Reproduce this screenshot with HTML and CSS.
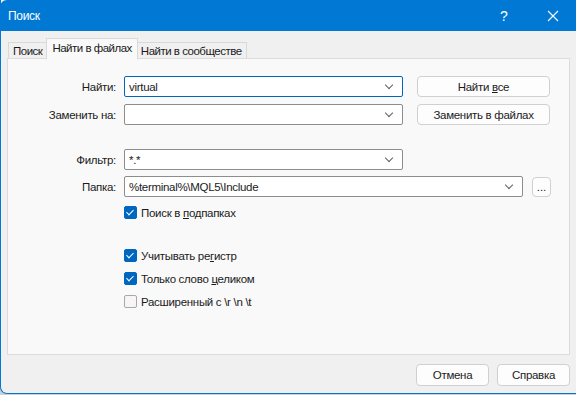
FILE: index.html
```html
<!DOCTYPE html>
<html lang="ru">
<head>
    <meta charset="UTF-8">
    <title>Поиск</title>
    <link rel="stylesheet" href="styles.css">
</head>
<body>
<div class="window">
    <div class="titlebar">
        <span class="title">Поиск</span>
        <span class="help">?</span>
        <span class="close">
            <svg width="12" height="12" viewBox="0 0 12 12"><path d="M1 1L11 11M11 1L1 11" stroke="#fff" stroke-width="1.1"/></svg>
        </span>
    </div>
    <div class="content">
        <div class="tabs">
            <div class="tab">Поиск</div>
            <div class="tab active">Найти в файлах</div>
            <div class="tab">Найти в сообществе</div>
        </div>
        <div class="panel">
            <div class="row">
                <label class="label">Найти:</label>
                <div class="combo focused"><span class="value">virtual</span><span class="arrow"></span></div>
                <button class="btn side">Найти <u>в</u>се</button>
            </div>
            <div class="row gap-s">
                <label class="label">Заменить на:</label>
                <div class="combo"><span class="value"></span><span class="arrow"></span></div>
                <button class="btn side">Заменить в файлах</button>
            </div>
            <div class="row gap-l">
                <label class="label">Фильтр:</label>
                <div class="combo"><span class="value">*.*</span><span class="arrow"></span></div>
            </div>
            <div class="row gap-xs">
                <label class="label">Папка:</label>
                <div class="combo wide"><span class="value">%terminal%\MQL5\Include</span><span class="arrow"></span></div>
                <button class="btn dots">...</button>
            </div>
            <div class="checks">
                <div class="check first"><span class="box on"></span><span>Поиск в <u>п</u>одпапках</span></div>
                <div class="check"><span class="box on"></span><span>Учитывать ре<u>г</u>истр</span></div>
                <div class="check"><span class="box on"></span><span>Только слово <u>ц</u>еликом</span></div>
                <div class="check"><span class="box"></span><span>Расширенный с \r \n \t</span></div>
            </div>
        </div>
        <div class="footer">
            <button class="btn foot">Отмена</button>
            <button class="btn foot">Справка</button>
        </div>
    </div>
</div>
</body>
</html>
```

FILE: styles.css
```css
body {
    margin: 0;
    width: 576px;
    height: 395px;
    background-color: #cfcfcf;
    font-family: "Liberation Sans", Arial, sans-serif;
    font-size: 11.5px;
    letter-spacing: -0.3px;
    color: #1b1b1b;
    overflow: hidden;
}
.window {
    width: 576px;
    height: 394px;
    background-color: #f0f0f0;
    border-left: 1px solid #0078d4;
    border-bottom: 1px solid #0078d4;
    border-bottom-left-radius: 7px;
    box-sizing: border-box;
    display: flex;
    flex-direction: column;
}
.titlebar {
    height: 31px;
    background-color: #0078d4;
    color: white;
    display: flex;
    align-items: center;
    padding-left: 8px;
    margin-left: -1px;
    border-top-left-radius: 7px;
    font-size: 12px;
}
.title {
    flex: 1;
}
.help {
    width: 14px;
    font-size: 14px;
    margin-right: 33px;
}
.close {
    width: 12px;
    height: 12px;
    margin-right: 17px;
    display: flex;
}
.content {
    flex: 1;
    padding: 7px 6px 0 6px;
    display: flex;
    flex-direction: column;
}
.tabs {
    display: flex;
    align-items: flex-end;
    height: 20px;
    padding-left: 2px;
}
.tab {
    height: 16px;
    line-height: 16px;
    padding: 0 4px;
    border: 1px solid #d9d9d9;
    border-bottom: none;
    background-color: #f0f0f0;
    box-sizing: border-box;
    margin-left: -1px;
    letter-spacing: -0.5px;
}
.tab.active {
    height: 21px;
    line-height: 18px;
    padding: 0 5px;
    background-color: #f9f9f9;
    position: relative;
    top: 1px;
    z-index: 1;
    margin-right: -1px;
}
.panel {
    height: 297px;
    box-sizing: border-box;
    background-color: #f9f9f9;
    border: 1px solid #dcdcdc;
    padding-top: 17px;
}
.row {
    display: flex;
    align-items: center;
    height: 21px;
}
.gap-s { margin-top: 7px; }
.gap-l { margin-top: 24px; }
.gap-xs { margin-top: 6px; }
.label {
    width: 108px;
    text-align: right;
    margin-right: 8px;
}
.combo {
    width: 279px;
    height: 21px;
    box-sizing: border-box;
    border: 1px solid #8d8d8d;
    border-radius: 2px;
    background-color: white;
    display: flex;
    align-items: center;
    padding-left: 4px;
}
.combo.focused {
    border-color: #0067c0;
}
.combo.wide {
    width: 399px;
}
.value {
    flex: 1;
}
.arrow {
    width: 5px;
    height: 5px;
    border-right: 1px solid #606060;
    border-bottom: 1px solid #606060;
    transform: rotate(45deg);
    margin: -4px 10px 0 0;
}
.btn {
    font-family: inherit;
    font-size: 11.5px;
    letter-spacing: -0.3px;
    color: #1b1b1b;
    background-color: #fdfdfd;
    border: 1px solid #d0d0d0;
    border-radius: 4px;
    height: 21px;
    padding: 0;
}
.side {
    width: 133px;
    margin-left: 14px;
}
.dots {
    width: 19px;
    height: 20px;
    margin-left: 9px;
    line-height: 10px;
    letter-spacing: 0;
}
.checks {
    padding-left: 116px;
    margin-top: 9px;
}
.check {
    display: flex;
    align-items: center;
    height: 13px;
    margin-bottom: 10px;
}
.check.first {
    margin-bottom: 30px;
}
.box {
    width: 13px;
    height: 13px;
    box-sizing: border-box;
    border: 1px solid #a8a8a8;
    border-radius: 2px;
    background-color: #f6f6f6;
    margin-right: 4px;
    position: relative;
}
.box.on {
    background-color: #0067c0;
    border-color: #0067c0;
}
.box.on::after {
    content: "";
    position: absolute;
    left: 3px;
    top: 1px;
    width: 3px;
    height: 6px;
    border-right: 1.5px solid white;
    border-bottom: 1.5px solid white;
    transform: rotate(45deg);
}
.footer {
    display: flex;
    justify-content: flex-end;
    gap: 8px;
    padding-top: 9px;
    padding-right: 0;
}
.foot {
    width: 73px;
    height: 22px;
}
```
